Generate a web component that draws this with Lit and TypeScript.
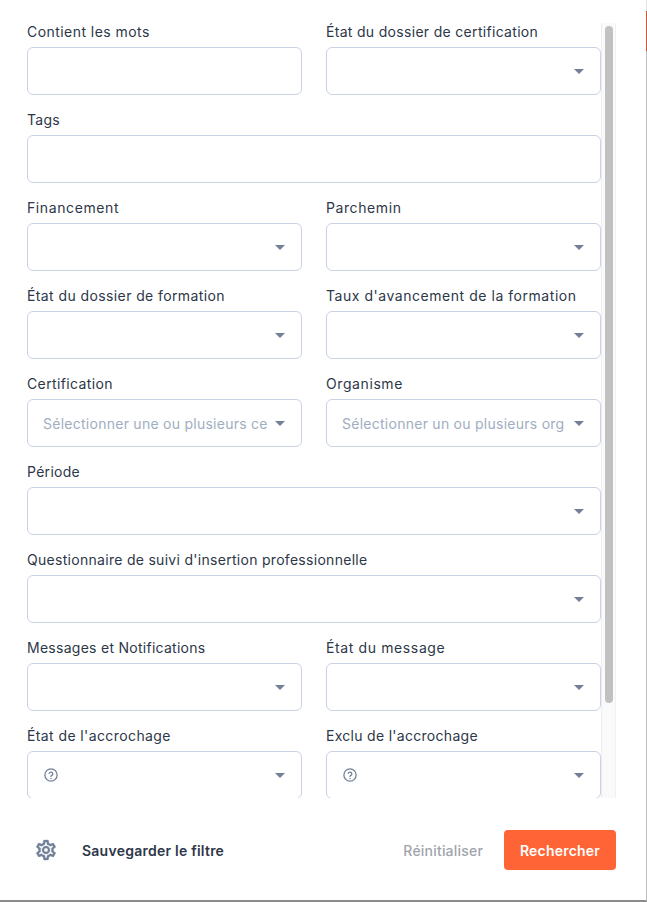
import { LitElement, html, css, nothing } from "lit";
import { customElement } from "lit/decorators.js";

type Field = { label: string; track: number; wide?: boolean; arrow?: boolean; placeholder?: string; help?: boolean };

const FIELDS: Field[] = [
  { label: "Contient les mots", track: 0.45 },
  { label: "État du dossier de certification", track: 0.31, arrow: true },
  { label: "Tags", track: 0.3, wide: true },
  { label: "Financement", track: 0.6, arrow: true },
  { label: "Parchemin", track: 0.59, arrow: true },
  { label: "État du dossier de formation", track: 0.4, arrow: true },
  { label: "Taux d'avancement de la formation", track: 0.54, arrow: true },
  { label: "Certification", track: 0.38, arrow: true, placeholder: "Sélectionner une ou plusieurs ce" },
  { label: "Organisme", track: 0.59, arrow: true, placeholder: "Sélectionner un ou plusieurs org" },
  { label: "Période", track: 0.29, wide: true, arrow: true },
  { label: "Questionnaire de suivi d'insertion professionnelle", track: 0.29, wide: true, arrow: true },
  { label: "Messages et Notifications", track: 0.27, arrow: true },
  { label: "État du message", track: 0.62, arrow: true },
  { label: "État de l'accrochage", track: 0.4, arrow: true, help: true },
  { label: "Exclu de l'accrochage", track: 0.29, arrow: true, help: true },
];

@customElement("app-root")
export class AppRoot extends LitElement {
  static styles = css`
    :host { display: block; width: 647px; height: 902px; font-family: Inter, "Liberation Sans", sans-serif; position: relative; overflow: hidden; background: #fff; }
    .panel { width: 647px; height: 902px; background: #fff; display: flex; flex-direction: column; box-sizing: border-box; padding: 23px 30px 0 27px; border-right: 1px solid #bdbdbd; border-bottom: 2px solid #8b8b8b; }
    .accent { position: absolute; right: 0; top: 0; width: 1px; height: 51px; background: linear-gradient(#e4e4e4 11px, #c4563a 11px); }
    .body { display: flex; height: 775px; flex: none; }
    .scroll { width: 574px; flex: none; overflow: hidden; }
    .track { width: 15px; flex: none; box-sizing: border-box; background: #fafafa; border-left: 1px solid #ededed; border-right: 1px solid #f1f1f1; padding: 3px 2px 0 3px; }
    .thumb { height: 677px; border-radius: 4px; background: #c1c1c1; }
    .grid { display: grid; grid-template-columns: 275px 275px; column-gap: 24px; row-gap: 16px; }
    .field { min-width: 0; }
    .wide { grid-column: 1 / -1; }
    label { display: block; height: 24px; line-height: 18px; font-size: 14px; color: #2d3748; white-space: nowrap; }
    .control { height: 48px; box-sizing: border-box; border: 1px solid #c9d3e3; border-radius: 6px; background: #fff; display: flex; align-items: center; padding: 0 16px 0 15px; gap: 8px; }
    .ph { flex: 1; min-width: 0; white-space: nowrap; font-size: 14px; letter-spacing: 0.26px; color: #a0aec0; }
    .spacer { flex: 1; }
    .arrow { width: 0; height: 0; flex: none; border-left: 5.5px solid transparent; border-right: 5.5px solid transparent; border-top: 5px solid #718096; }
    .help { width: 14px; height: 14px; color: #718096; flex: none; margin-left: 1px; }
    .footer { flex: 1; display: flex; align-items: center; padding-left: 7px; margin-top: 2px; }
    .gear { width: 24px; height: 24px; color: #718096; flex: none; }
    .save { margin-left: 24px; font-size: 14px; font-weight: 600; color: #2d3748; letter-spacing: 0.24px; }
    .grow { flex: 1; }
    .reset { font-size: 14px; font-weight: 500; color: #a0a4ab; letter-spacing: 0.2px; margin-right: 21px; }
    .go { width: 112px; height: 40px; border-radius: 4px; background: #ff6436; color: #fff; font-size: 14px; font-weight: 600; letter-spacing: 0.2px; display: flex; align-items: center; justify-content: center; }
  `;

  private field(f: Field) {
    return html`<div class="field ${f.wide ? "wide" : ""}">
      <label style="letter-spacing:${f.track}px">${f.label}</label>
      <div class="control">
        ${f.help
          ? html`<svg class="help" viewBox="0 0 24 24" fill="none" stroke="currentColor" stroke-width="2.2" stroke-linecap="round" stroke-linejoin="round"><circle cx="12" cy="12" r="10.5"></circle><path d="M8.800 9.200a3.300 3.300 0 0 1 6.400 1c0 2.200-3.200 2.600-3.200 4.300"></path><path d="M12 17.800v.2"></path></svg>`
          : nothing}
        ${f.placeholder ? html`<span class="ph">${f.placeholder}</span>` : html`<span class="spacer"></span>`}
        ${f.arrow ? html`<span class="arrow"></span>` : nothing}
      </div>
    </div>`;
  }

  render() {
    return html`<div class="panel">
        <div class="body">
          <div class="scroll"><div class="grid">${FIELDS.map((f) => this.field(f))}</div></div>
          <div class="track"><div class="thumb"></div></div>
        </div>
        <div class="footer">
          <svg class="gear" viewBox="0 0 24 24" fill="currentColor" stroke="currentColor" stroke-width="0.35">
            <path d="M19.430 12.980c.04-.32.07-.64.07-.98 0-.34-.03-.66-.07-.98l2.110-1.650c.19-.15.24-.42.12-.64l-2-3.460c-.09-.16-.26-.25-.44-.25-.06 0-.12.01-.17.03l-2.490 1c-.52-.4-1.080-.73-1.690-.98l-.38-2.650C14.460 2.180 14.250 2 14 2h-4c-.25 0-.46.18-.49.42l-.38 2.650c-.61.25-1.170.59-1.690.98l-2.490-1c-.06-.02-.12-.03-.18-.03-.17 0-.34.09-.43.25l-2 3.460c-.13.22-.07.49.12.64l2.110 1.650c-.04.32-.07.65-.07.98 0 .33.03.66.07.98l-2.110 1.650c-.19.15-.24.42-.12.64l2 3.460c.09.16.26.25.44.25.06 0 .12-.01.17-.03l2.490-1c.52.4 1.080.73 1.690.98l.38 2.650c.03.24.24.42.49.42h4c.25 0 .46-.18.49-.42l.38-2.650c.61-.25 1.170-.59 1.690-.98l2.490 1c.06.02.12.03.18.03.17 0 .34-.09.43-.25l2-3.460c.12-.22.07-.49-.12-.64l-2.110-1.650zm-1.980-1.710c.04.31.05.52.05.73 0 .21-.02.43-.05.73l-.14 1.130.89.7 1.080.84-.7 1.210-1.270-.51-1.040-.42-.9.68c-.43.32-.84.56-1.250.73l-1.060.43-.16 1.130-.2 1.350h-1.400l-.19-1.350-.16-1.130-1.060-.43c-.43-.18-.83-.41-1.230-.71l-.91-.7-1.060.43-1.270.51-.7-1.210 1.080-.84.89-.7-.14-1.130c-.03-.31-.05-.54-.05-.74s.02-.43.05-.73l.14-1.130-.89-.7-1.080-.84.7-1.210 1.270.51 1.040.42.9-.68c.43-.32.84-.56 1.250-.73l1.060-.43.16-1.130.2-1.350h1.390l.19 1.350.16 1.130 1.060.43c.43.18.83.41 1.230.71l.91.7 1.060-.43 1.270-.51.7 1.210-1.070.85-.89.7.14 1.130zM12 8c-2.210 0-4 1.790-4 4s1.790 4 4 4 4-1.790 4-4-1.790-4-4-4zm0 6c-1.100 0-2-.9-2-2s.9-2 2-2 2 .9 2 2-.9 2-2 2z"></path>
          </svg>
          <span class="save">Sauvegarder le filtre</span>
          <span class="grow"></span>
          <span class="reset">Réinitialiser</span>
          <div class="go">Rechercher</div>
        </div>
      </div>
      <div class="accent"></div>`;
  }
}
